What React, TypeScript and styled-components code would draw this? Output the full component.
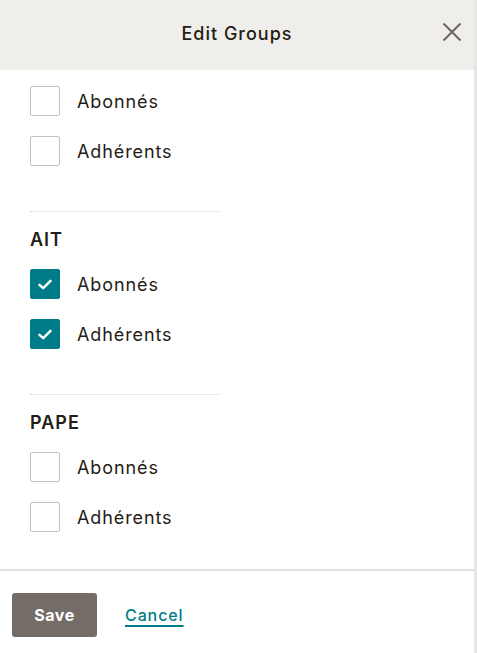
import React, { useState } from 'react';
import styled, { createGlobalStyle } from 'styled-components';

const GlobalStyle = createGlobalStyle`
  html, body {
    margin: 0;
    padding: 0;
    height: 100%;
    background: #e6e6e6;
  }
  #root {
    height: 100%;
  }
  * {
    box-sizing: border-box;
  }
`;

const Modal = styled.div`
  display: flex;
  flex-direction: column;
  width: calc(100% - 3px);
  height: 100vh;
  background: #ffffff;
  font-family: Inter, 'Liberation Sans', sans-serif;
  color: #241c15;
`;

const Header = styled.header`
  position: relative;
  display: flex;
  align-items: center;
  justify-content: center;
  height: 70px;
  padding-bottom: 4px;
  flex-shrink: 0;
  background: #efeeea;
`;

const Title = styled.h1`
  margin: 0;
  font-size: 18px;
  font-weight: 500;
  letter-spacing: 1px;
`;

const CloseButton = styled.button`
  position: absolute;
  right: 10px;
  top: 20px;
  width: 24px;
  height: 24px;
  padding: 0;
  border: 0;
  background: transparent;
  cursor: pointer;
  display: flex;
  align-items: center;
  justify-content: center;
`;

const Body = styled.div`
  flex: 1;
  overflow: hidden;
  padding: 16px 30px 0;
`;

const Group = styled.section<{ first?: boolean; last?: boolean }>`
  padding-top: ${props => (props.first ? '0' : '16px')};
  padding-bottom: 45px;
  width: 190px;
  border-bottom: ${props => (props.last ? '0' : '1px dotted #d9d7d5')};
`;

const GroupTitle = styled.h2`
  margin: 0 0 17px;
  font-size: 18px;
  line-height: 24px;
  font-weight: 600;
  letter-spacing: 1px;
`;

const Rows = styled.div`
  display: flex;
  flex-direction: column;
  gap: 20px;
`;

const Row = styled.label`
  display: flex;
  align-items: center;
  gap: 17px;
  height: 30px;
  font-size: 18px;
  letter-spacing: 0.9px;
  cursor: pointer;
  white-space: nowrap;
`;

const Box = styled.span<{ checked: boolean }>`
  display: flex;
  align-items: center;
  justify-content: center;
  width: 30px;
  height: 30px;
  flex-shrink: 0;
  border-radius: 2px;
  border: 1px solid ${props => (props.checked ? '#007c89' : '#c3c1bf')};
  background: ${props => (props.checked ? '#007c89' : '#ffffff')};
`;

const Footer = styled.footer`
  display: flex;
  align-items: center;
  gap: 28px;
  height: 84px;
  flex-shrink: 0;
  padding: 6px 12px 0;
  border-top: 2px solid #e2e1df;
`;

const SaveButton = styled.button`
  width: 85px;
  height: 44px;
  border: 0;
  border-radius: 3px;
  background: #736c67;
  color: #ffffff;
  font-family: Inter, 'Liberation Sans', sans-serif;
  font-size: 16px;
  font-weight: 700;
  letter-spacing: 0.6px;
  cursor: pointer;
`;

const CancelLink = styled.a`
  color: #007c89;
  font-size: 16px;
  font-weight: 500;
  letter-spacing: 0.9px;
  text-decoration: underline;
  text-underline-offset: 4px;
  text-decoration-thickness: 2px;
  cursor: pointer;
`;

const HiddenInput = styled.input`
  display: none;
`;

interface GroupData {
  name?: string;
  options: { label: string; checked: boolean }[];
}

const initialGroups: GroupData[] = [
  {
    options: [
      { label: 'Abonnés', checked: false },
      { label: 'Adhérents', checked: false },
    ],
  },
  {
    name: 'AIT',
    options: [
      { label: 'Abonnés', checked: true },
      { label: 'Adhérents', checked: true },
    ],
  },
  {
    name: 'PAPE',
    options: [
      { label: 'Abonnés', checked: false },
      { label: 'Adhérents', checked: false },
    ],
  },
];

function Check() {
  return (
    <svg width="14" height="11" viewBox="0 0 14 11" fill="none">
      <path
        d="M1.5 5.8 L5.2 9.2 L12.5 1.8"
        stroke="#ffffff"
        strokeWidth="2.4"
        strokeLinecap="round"
        strokeLinejoin="round"
      />
    </svg>
  );
}

export default function App() {
  const [groups, setGroups] = useState(initialGroups);

  const toggle = (g: number, o: number) => {
    setGroups(prev =>
      prev.map((group, gi) =>
        gi !== g
          ? group
          : {
              ...group,
              options: group.options.map((opt, oi) =>
                oi === o ? { ...opt, checked: !opt.checked } : opt
              ),
            }
      )
    );
  };

  return (
    <>
      <GlobalStyle />
      <Modal>
        <Header>
          <Title>Edit Groups</Title>
          <CloseButton aria-label="Close">
            <svg width="20" height="20" viewBox="0 0 20 20">
              <path
                d="M1.5 1.5 L18.5 18.5 M18.5 1.5 L1.5 18.5"
                stroke="#6b6561"
                strokeWidth="2"
              />
            </svg>
          </CloseButton>
        </Header>
        <Body>
          {groups.map((group, gi) => (
            <Group key={gi} first={gi === 0} last={gi === groups.length - 1}>
              {group.name && <GroupTitle>{group.name}</GroupTitle>}
              <Rows>
                {group.options.map((opt, oi) => (
                  <Row key={oi}>
                    <HiddenInput
                      type="checkbox"
                      checked={opt.checked}
                      onChange={() => toggle(gi, oi)}
                    />
                    <Box checked={opt.checked}>{opt.checked && <Check />}</Box>
                    {opt.label}
                  </Row>
                ))}
              </Rows>
            </Group>
          ))}
        </Body>
        <Footer>
          <SaveButton>Save</SaveButton>
          <CancelLink>Cancel</CancelLink>
        </Footer>
      </Modal>
    </>
  );
}
